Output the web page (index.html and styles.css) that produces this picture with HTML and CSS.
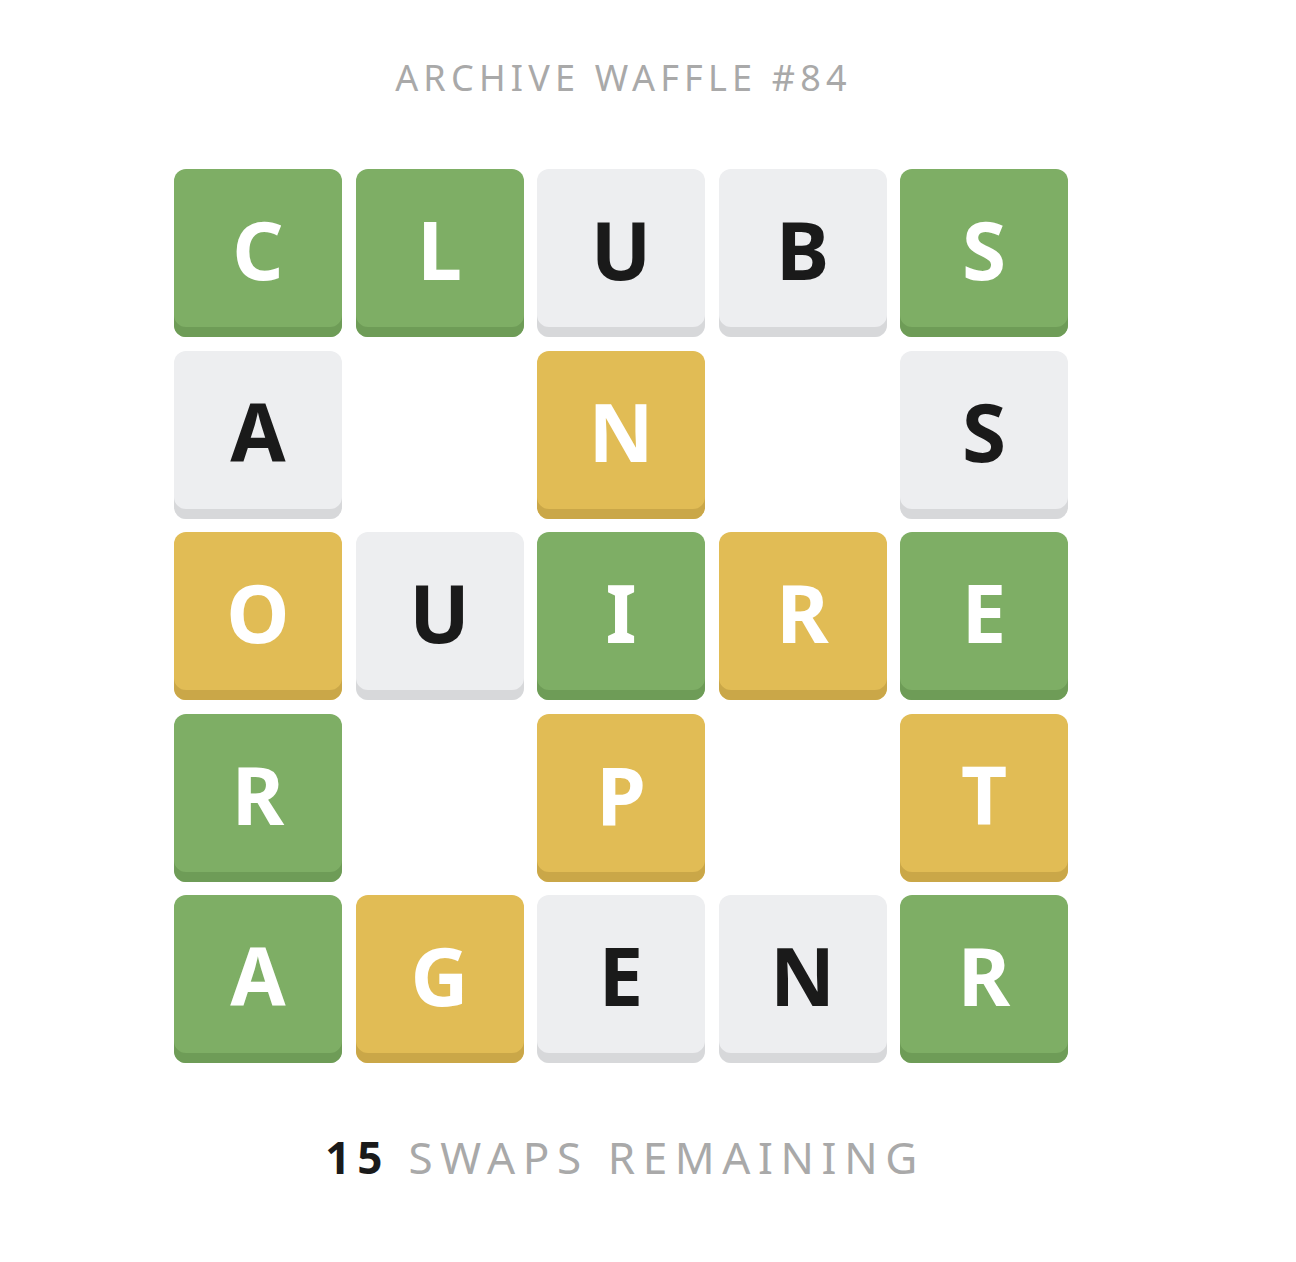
FILE: index.html
```html
<!DOCTYPE html>
<html>
<head>
<meta charset="utf-8">
<link rel="stylesheet" href="styles.css">
</head>
<body>
<main class="page">
  <h1 class="title">ARCHIVE WAFFLE #84</h1>
  <div class="board">
    <div class="tile green">C</div>
    <div class="tile green">L</div>
    <div class="tile gray">U</div>
    <div class="tile gray">B</div>
    <div class="tile green">S</div>

    <div class="tile gray">A</div>
    <div class="hole"></div>
    <div class="tile yellow">N</div>
    <div class="hole"></div>
    <div class="tile gray">S</div>

    <div class="tile yellow">O</div>
    <div class="tile gray">U</div>
    <div class="tile green">I</div>
    <div class="tile yellow">R</div>
    <div class="tile green">E</div>

    <div class="tile green">R</div>
    <div class="hole"></div>
    <div class="tile yellow">P</div>
    <div class="hole"></div>
    <div class="tile yellow">T</div>

    <div class="tile green">A</div>
    <div class="tile yellow">G</div>
    <div class="tile gray">E</div>
    <div class="tile gray">N</div>
    <div class="tile green">R</div>
  </div>
  <p class="swaps"><span class="count">15</span> SWAPS REMAINING</p>
</main>
</body>
</html>
```

FILE: styles.css
```css
html, body {
  margin: 0;
  padding: 0;
  background: #ffffff;
}

.page {
  width: 1242px;
  display: flex;
  flex-direction: column;
  align-items: center;
  font-family: "Noto Sans", "Open Sans", sans-serif;
}

.title {
  margin: 56px 0 0;
  padding-left: 5px;
  font-size: 36px;
  line-height: 44px;
  font-weight: 400;
  letter-spacing: 5.2px;
  color: #a9a9a9;
}

.board {
  margin-top: 69px;
  display: grid;
  grid-template-columns: repeat(5, 168px);
  grid-auto-rows: 168px;
  gap: 13.5px;
}

.tile {
  box-sizing: border-box;
  border-radius: 12px;
  display: flex;
  align-items: center;
  justify-content: center;
  padding-bottom: 8px;
  font-size: 80px;
  font-weight: 700;
  line-height: 1;
}

.green {
  background: #7eae65;
  box-shadow: inset 0 -10px 0 #6e9c57;
  color: #ffffff;
}

.yellow {
  background: #e1bc55;
  box-shadow: inset 0 -10px 0 #caa748;
  color: #ffffff;
}

.gray {
  background: #edeef0;
  box-shadow: inset 0 -10px 0 #d7d8da;
  color: #1a1a1a;
}

.swaps {
  margin: 66px 0 0;
  padding-left: 8px;
  font-size: 44px;
  line-height: 56px;
  letter-spacing: 7.6px;
  color: #a9a9a9;
}

.count {
  font-weight: 700;
  color: #1a1a1a;
  letter-spacing: 7px;
}
```
